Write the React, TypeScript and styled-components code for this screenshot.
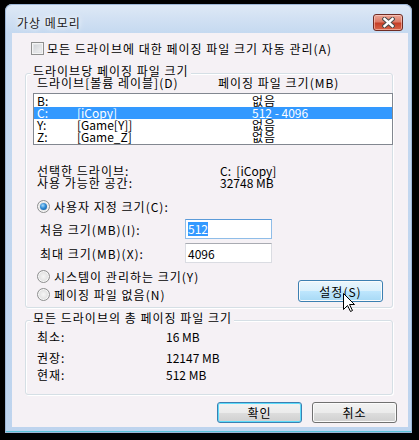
import React from "react";
import styled, { createGlobalStyle } from "styled-components";

const font = `"Noto Sans CJK KR", "Noto Sans", sans-serif`;
const face = "#f5f1f5";

const GlobalStyle = createGlobalStyle`
  html, body {
    margin: 0;
    padding: 0;
    background: #000;
  }
  body {
    font-family: ${font};
    font-size: 12px;
    letter-spacing: 1px;
    color: #000;
  }
`;

const Window = styled.div`
  position: relative;
  width: 407px;
  height: 429px;
  margin: 4px 0 0 5px;
  display: flex;
  flex-direction: column;
  border-radius: 7px 7px 0 0;
  background: linear-gradient(180deg, #dfe9f6 0px, #d2e1f3 14px, #c5d9f0 29px, #bed4ee 100%);
  box-shadow: inset 0 0 0 1px #9db6d6, inset 0 -2px 0 #5ac3d6;
`;

const TitleBar = styled.div`
  height: 29px;
  flex: none;
  box-sizing: border-box;
  display: flex;
  align-items: flex-start;
  justify-content: space-between;
  padding: 10px 9px 0 12px;
`;

const Title = styled.span`
  line-height: 17px;
  font-size: 12px;
  color: #1a1a1a;
  text-shadow: 0 0 5px #fff, 0 0 8px #fff;
`;

const CloseButton = styled.div`
  width: 30px;
  height: 17px;
  box-sizing: border-box;
  border: 1px solid #6f2c24;
  border-radius: 3px;
  display: flex;
  align-items: center;
  justify-content: center;
  background: linear-gradient(180deg, #eba595 0%, #dc7b68 45%, #c63f28 55%, #d8654a 100%);
  box-shadow: inset 0 0 0 1px rgba(255, 215, 205, 0.55);
`;

const Client = styled.div`
  margin: 0 4px 6px 7px;
  height: 394px;
  flex: none;
  box-sizing: border-box;
  padding-top: 9px;
  background: ${face};
  display: flex;
  flex-direction: column;
`;

const CheckRow = styled.div`
  display: flex;
  align-items: center;
  gap: 3px;
  height: 13px;
  padding-left: 19px;
  white-space: nowrap;
`;

const Checkbox = styled.span`
  width: 13px;
  height: 13px;
  box-sizing: border-box;
  border: 1px solid #8e8f8f;
  background: linear-gradient(135deg, #c9ccd1, #f7f7f7);
  box-shadow: inset 0 0 0 1px #f4f4f4, inset 0 0 0 2px #e2e4e7;
`;

const Group = styled.div<{ $top: number; $h: number }>`
  margin: ${(p) => p.$top}px 0 0 13px;
  width: 368px;
  height: ${(p) => p.$h}px;
  flex: none;
  box-sizing: border-box;
  border: 1px solid #d5dfe5;
  border-radius: 3px;
  box-shadow: inset 1px 1px 0 #fff, 1px 1px 0 #fff;
  display: flex;
  flex-direction: column;
`;

const Caption = styled.span`
  align-self: flex-start;
  margin: -9px 0 0 5px;
  padding: 0 2px;
  height: 12px;
  line-height: 12px;
  background: ${face};
  white-space: nowrap;
`;

const HeaderRow = styled.div`
  display: flex;
  height: 12px;
  line-height: 12px;
  padding-left: 11px;
  white-space: nowrap;
`;

const Cell = styled.span<{ $w?: number }>`
  width: ${(p) => (p.$w ? `${p.$w}px` : "auto")};
  flex: none;
`;

const Num = styled.span`
  letter-spacing: 0;
`;

const DriveList = styled.div`
  margin: 4px 0 0 7px;
  width: 360px;
  height: 52px;
  flex: none;
  box-sizing: border-box;
  border: 1px solid #828790;
  padding-top: 1px;
  background: #fff;
`;

const DriveRow = styled.div<{ $sel?: boolean }>`
  display: grid;
  grid-template-columns: 40px 175px 1fr;
  height: 12px;
  line-height: 12px;
  padding-left: 3px;
  white-space: nowrap;
  letter-spacing: 0;
  background: ${(p) => (p.$sel ? "#3399ff" : "transparent")};
  color: ${(p) => (p.$sel ? "#fff" : "#000")};
`;

const Hangul = styled.span`
  letter-spacing: 1px;
`;

const InfoRow = styled.div<{ $top: number; $w: number }>`
  display: grid;
  grid-template-columns: ${(p) => p.$w}px 1fr;
  margin-top: ${(p) => p.$top}px;
  height: 12px;
  line-height: 12px;
  padding-left: 11px;
  white-space: nowrap;
`;

const RadioRow = styled.label<{ $top?: number }>`
  display: flex;
  align-items: center;
  gap: 4px;
  height: 13px;
  margin-top: ${(p) => p.$top ?? 0}px;
  padding-left: 11px;
  white-space: nowrap;
`;

const Radio = styled.span<{ $on?: boolean }>`
  position: relative;
  width: 13px;
  height: 13px;
  flex: none;
  box-sizing: border-box;
  border-radius: 50%;
  border: 1px solid #8e8f8f;
  background: radial-gradient(circle at 50% 50%, #f6f6f6 0%, #e3e3e3 55%, #cfd1d4 100%);
  box-shadow: inset 0 0 0 1px #f7f7f7;
  &::after {
    content: "";
    display: ${(p) => (p.$on ? "block" : "none")};
    position: absolute;
    left: 2px;
    top: 2px;
    width: 7px;
    height: 7px;
    border-radius: 50%;
    background: radial-gradient(circle at 40% 35%, #a7dbfa 0%, #2f8bd6 45%, #0d4f8f 100%);
  }
`;

const SizeRow = styled.div<{ $top: number }>`
  display: flex;
  align-items: center;
  height: 20px;
  margin-top: ${(p) => p.$top}px;
  padding-left: 14px;
  white-space: nowrap;
`;

const SizeLabel = styled.span`
  width: 145px;
  flex: none;
`;

const TextBox = styled.div<{ $focus?: boolean }>`
  width: 87px;
  height: 20px;
  box-sizing: border-box;
  display: flex;
  align-items: center;
  padding-left: 2px;
  letter-spacing: 0;
  background: #fff;
  border: 1px solid ${(p) => (p.$focus ? "#8fbde8" : "#dadce2")};
  border-top-color: ${(p) => (p.$focus ? "#5c9bd8" : "#a9abb2")};
`;

const Selected = styled.span`
  background: #3399ff;
  color: #fff;
  line-height: 14px;
`;

const BottomRow = styled.div`
  display: flex;
  margin-top: 7px;
`;

const RadioStack = styled.div`
  display: flex;
  flex-direction: column;
  gap: 5px;
`;

const Button = styled.div<{ $kind?: "default" | "hover" | "normal"; $h?: number }>`
  width: 85px;
  height: ${(p) => p.$h ?? 21}px;
  flex: none;
  box-sizing: border-box;
  display: flex;
  align-items: center;
  justify-content: center;
  border-radius: 3px;
  border: 1px solid ${(p) => (p.$kind === "normal" ? "#707070" : "#3c7fb1")};
  background: ${(p) =>
    p.$kind === "hover"
      ? "linear-gradient(180deg, #eaf6fd 0%, #d9f0fc 50%, #bee6fd 51%, #a7d9f5 100%)"
      : "linear-gradient(180deg, #f2f2f2 0%, #ebebeb 50%, #dddddd 51%, #cfcfcf 100%)"};
  box-shadow: ${(p) =>
    p.$kind === "default" ? "inset 0 0 0 1px #5ddcfb" : "inset 0 0 0 1px #fbfbfb"};
  white-space: nowrap;
`;

const SetButton = styled(Button)`
  margin: 10px 9px 0 auto;
`;

const Footer = styled.div`
  display: flex;
  justify-content: flex-end;
  gap: 10px;
  margin-top: 7px;
  padding-right: 11px;
`;

const Cursor = styled.svg`
  position: absolute;
  left: 338px;
  top: 289px;
`;

export default function App() {
  return (
    <>
      <GlobalStyle />
      <Window>
        <TitleBar>
          <Title>가상 메모리</Title>
          <CloseButton>
            <svg width="13" height="11" viewBox="0 0 13 11">
              <path d="M2.5 2 L10.5 9 M10.5 2 L2.5 9" stroke="#4a4a4a" strokeWidth="4.4" strokeLinecap="square" fill="none" />
              <path d="M2.5 2 L10.5 9 M10.5 2 L2.5 9" stroke="#fff" strokeWidth="2.4" strokeLinecap="square" fill="none" />
            </svg>
          </CloseButton>
        </TitleBar>
        <Client>
          <CheckRow>
            <Checkbox />
            <span>모든 드라이브에 대한 페이징 파일 크기 자동 관리(A)</span>
          </CheckRow>

          <Group $top={18} $h={235}>
            <Caption>드라이브당 페이징 파일 크기</Caption>
            <HeaderRow>
              <Cell $w={181}>드라이브[볼륨 레이블](D)</Cell>
              <Cell>페이징 파일 크기(MB)</Cell>
            </HeaderRow>
            <DriveList>
              <DriveRow>
                <span>B:</span>
                <span></span>
                <Hangul>없음</Hangul>
              </DriveRow>
              <DriveRow $sel>
                <span>C:</span>
                <span>[iCopy]</span>
                <span>512 - 4096</span>
              </DriveRow>
              <DriveRow>
                <span>Y:</span>
                <span>[Game[Y]]</span>
                <Hangul>없음</Hangul>
              </DriveRow>
              <DriveRow>
                <span>Z:</span>
                <span>[Game_Z]</span>
                <Hangul>없음</Hangul>
              </DriveRow>
            </DriveList>
            <InfoRow $top={20} $w={183}>
              <span>선택한 드라이브:</span>
              <Num>C:&nbsp;&nbsp;[iCopy]</Num>
            </InfoRow>
            <InfoRow $top={0} $w={183}>
              <span>사용 가능한 공간:</span>
              <Num>32748 MB</Num>
            </InfoRow>
            <RadioRow $top={11}>
              <Radio $on />
              <span>사용자 지정 크기(C):</span>
            </RadioRow>
            <SizeRow $top={6}>
              <SizeLabel>처음 크기(MB)(I):</SizeLabel>
              <TextBox $focus>
                <Selected>512</Selected>
              </TextBox>
            </SizeRow>
            <SizeRow $top={4}>
              <SizeLabel>최대 크기(MB)(X):</SizeLabel>
              <TextBox>4096</TextBox>
            </SizeRow>
            <BottomRow>
              <RadioStack>
                <RadioRow>
                  <Radio />
                  <span>시스템이 관리하는 크기(Y)</span>
                </RadioRow>
                <RadioRow>
                  <Radio />
                  <span>페이징 파일 없음(N)</span>
                </RadioRow>
              </RadioStack>
              <SetButton $kind="hover" $h={22}>
                설정(S)
              </SetButton>
            </BottomRow>
          </Group>

          <Group $top={12} $h={75}>
            <Caption>모든 드라이브의 총 페이징 파일 크기</Caption>
            <InfoRow $top={7} $w={129}>
              <span>최소:</span>
              <Num>16 MB</Num>
            </InfoRow>
            <InfoRow $top={9} $w={129}>
              <span>권장:</span>
              <Num>12147 MB</Num>
            </InfoRow>
            <InfoRow $top={5} $w={129}>
              <span>현재:</span>
              <Num>512 MB</Num>
            </InfoRow>
          </Group>

          <Footer>
            <Button $kind="default">확인</Button>
            <Button $kind="normal">취소</Button>
          </Footer>
        </Client>
        <Cursor width="13" height="20" viewBox="0 0 13 20">
          <path
            d="M0.5 0.5 L0.5 16.5 L4.5 12.5 L7.5 18.5 L9.5 17.5 L6.5 11.5 L11.5 11.5 Z"
            fill="#fff"
            stroke="#000"
            strokeWidth="1"
            strokeLinejoin="miter"
          />
        </Cursor>
      </Window>
    </>
  );
}
